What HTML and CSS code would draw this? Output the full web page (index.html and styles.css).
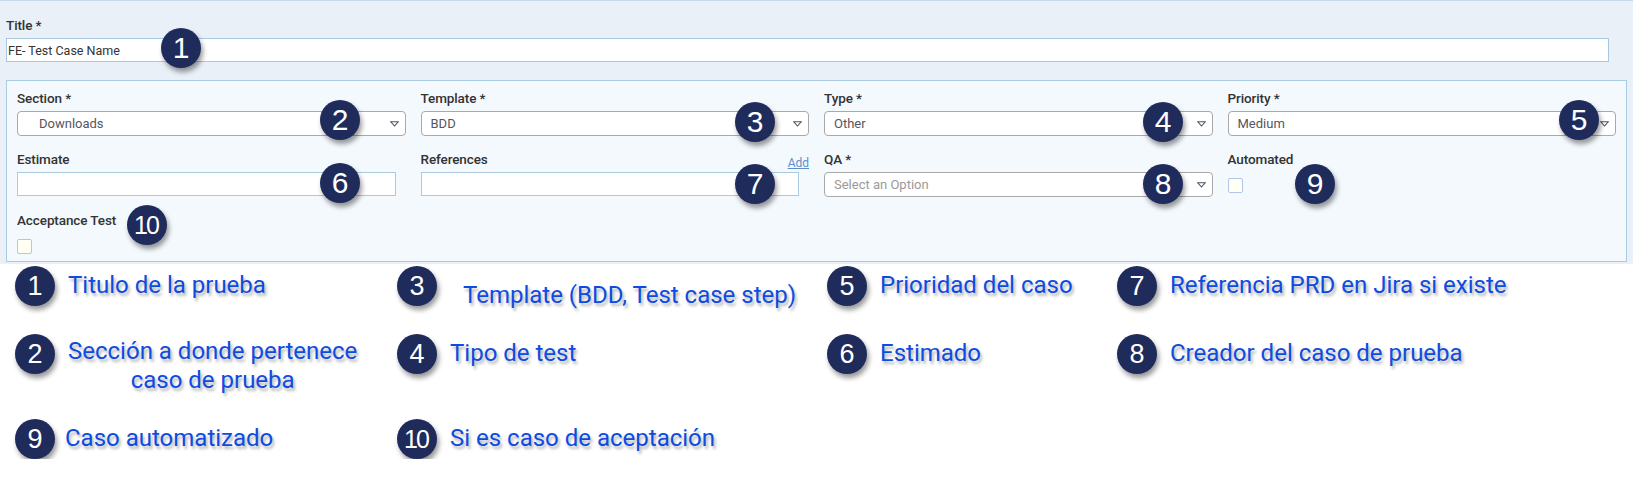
FILE: index.html
```html
<!DOCTYPE html>
<html lang="es">
<head>
<meta charset="utf-8">
<title>Test Case</title>
<link rel="stylesheet" href="styles.css">
</head>
<body>
<div class="form-area">
  <div class="title-field">
    <label class="field-label">Title <span class="req">*</span></label>
    <input class="text-input title-input" type="text" value="FE- Test Case Name">
  </div>

  <div class="panel">
    <div class="field">
      <label class="field-label">Section <span class="req">*</span></label>
      <div class="select select-indent"><span>Downloads</span><svg class="caret" width="9" height="6" viewBox="0 0 9 6"><polygon points="0.8,0.8 8.2,0.8 4.5,5" fill="none" stroke="#4d5566" stroke-width="1.1"/></svg></div>
    </div>
    <div class="field">
      <label class="field-label">Template <span class="req">*</span></label>
      <div class="select"><span>BDD</span><svg class="caret" width="9" height="6" viewBox="0 0 9 6"><polygon points="0.8,0.8 8.2,0.8 4.5,5" fill="none" stroke="#4d5566" stroke-width="1.1"/></svg></div>
    </div>
    <div class="field">
      <label class="field-label">Type <span class="req">*</span></label>
      <div class="select"><span>Other</span><svg class="caret" width="9" height="6" viewBox="0 0 9 6"><polygon points="0.8,0.8 8.2,0.8 4.5,5" fill="none" stroke="#4d5566" stroke-width="1.1"/></svg></div>
    </div>
    <div class="field">
      <label class="field-label">Priority <span class="req">*</span></label>
      <div class="select"><span>Medium</span><svg class="caret" width="9" height="6" viewBox="0 0 9 6"><polygon points="0.8,0.8 8.2,0.8 4.5,5" fill="none" stroke="#4d5566" stroke-width="1.1"/></svg></div>
    </div>

    <div class="field">
      <label class="field-label">Estimate</label>
      <input class="text-input narrow" type="text">
    </div>
    <div class="field">
      <div class="label-row">
        <label class="field-label">References</label>
        <a class="add-link" href="#">Add</a>
      </div>
      <input class="text-input narrow" type="text">
    </div>
    <div class="field">
      <label class="field-label">QA <span class="req">*</span></label>
      <div class="select"><span class="placeholder">Select an Option</span><svg class="caret" width="9" height="6" viewBox="0 0 9 6"><polygon points="0.8,0.8 8.2,0.8 4.5,5" fill="none" stroke="#4d5566" stroke-width="1.1"/></svg></div>
    </div>
    <div class="field">
      <label class="field-label">Automated</label>
      <span class="checkbox"></span>
    </div>

    <div class="field">
      <label class="field-label">Acceptance Test</label>
      <span class="checkbox"></span>
    </div>
  </div>

  <span class="badge b1">1</span>
  <span class="badge b2">2</span>
  <span class="badge b3">3</span>
  <span class="badge b4">4</span>
  <span class="badge b5">5</span>
  <span class="badge b6">6</span>
  <span class="badge b7">7</span>
  <span class="badge b8">8</span>
  <span class="badge b9">9</span>
  <span class="badge b10 ten">10</span>
</div>

<div class="legend">
  <div class="legend-item"><span class="legend-badge">1</span><span class="legend-text">Titulo de la prueba</span></div>
  <div class="legend-item"><span class="legend-badge">3</span><span class="legend-text shifted">Template (BDD, Test case step)</span></div>
  <div class="legend-item"><span class="legend-badge">5</span><span class="legend-text">Prioridad del caso</span></div>
  <div class="legend-item"><span class="legend-badge">7</span><span class="legend-text">Referencia PRD en Jira si existe</span></div>

  <div class="legend-item"><span class="legend-badge">2</span><span class="legend-text centered">Sección a donde pertenece<br>caso de prueba</span></div>
  <div class="legend-item"><span class="legend-badge">4</span><span class="legend-text">Tipo de test</span></div>
  <div class="legend-item"><span class="legend-badge">6</span><span class="legend-text">Estimado</span></div>
  <div class="legend-item"><span class="legend-badge">8</span><span class="legend-text">Creador del caso de prueba</span></div>

  <div class="legend-item"><span class="legend-badge">9</span><span class="legend-text tight">Caso automatizado</span></div>
  <div class="legend-item"><span class="legend-badge ten">10</span><span class="legend-text">Si es caso de aceptación</span></div>
</div>
</body>
</html>
```

FILE: styles.css
```css
* { box-sizing: border-box; }

body {
  margin: 0;
  background: #ffffff;
  font-family: Roboto, "Noto Sans", sans-serif;
}

.form-area {
  position: relative;
  background: #e9f0f7;
  border-top: 1px solid #c6d8e9;
  padding: 15px 6px 2px 6px;
}

.field-label {
  display: block;
  font-family: Roboto, sans-serif;
  font-weight: 500;
  font-size: 13.5px;
  line-height: 18px;
  color: #333333;
  letter-spacing: -0.1px;
}

.title-field {
  display: flex;
  flex-direction: column;
}

.text-input {
  display: block;
  margin-top: 4px;
  height: 24px;
  border: 1px solid #a9c9e1;
  border-radius: 0;
  background: #ffffff;
  padding: 0 1px;
  font-family: Roboto, sans-serif;
  font-size: 12.5px;
  color: #333333;
  outline: none;
}

.title-input {
  width: calc(100% - 18px);
}

.text-input.narrow {
  width: calc(100% - 10px);
}

.panel {
  margin-top: 18px;
  border: 1px solid #a9cbe3;
  background: #f4f9fe;
  padding: 8px 10px 7px 10px;
  display: grid;
  grid-template-columns: repeat(4, 1fr);
  column-gap: 15px;
  row-gap: 14px;
}

.field {
  display: flex;
  flex-direction: column;
  align-items: flex-start;
}

.field .select,
.field .label-row {
  width: 100%;
}

.label-row {
  display: flex;
  justify-content: space-between;
  align-items: flex-end;
}

.add-link {
  font-size: 12px;
  line-height: 14px;
  color: #5d8fcc;
  text-decoration: underline;
  margin-bottom: -2px;
}

.select {
  margin-top: 4px;
  height: 25px;
  border: 1px solid #a9a9a9;
  border-radius: 4px;
  background: #ffffff;
  display: flex;
  align-items: center;
  justify-content: space-between;
  padding: 0 6px 0 9px;
  font-size: 13px;
  color: #55565f;
}

.select-indent {
  padding-left: 21px;
}

.placeholder {
  color: #9a9a9a;
}

.caret {
  flex: none;
  display: block;
}

.checkbox {
  display: block;
  margin-top: 10px;
  width: 15px;
  height: 15px;
  border: 1px solid #b4c4ea;
  border-radius: 2px;
  background: #fffff2;
}

/* annotation badges over the form */
.badge {
  position: absolute;
  width: 40px;
  height: 40px;
  border-radius: 50%;
  background: #1f2b5b;
  color: #ffffff;
  display: flex;
  align-items: center;
  justify-content: center;
  font-family: "Liberation Sans", Arial, sans-serif;
  font-size: 30px;
  line-height: 1;
  box-shadow: 2px 4px 5px rgba(0, 0, 0, 0.4);
}

.badge.ten,
.legend-badge.ten {
  font-size: 25px;
  letter-spacing: -2px;
  padding-right: 2px;
}

.b1 { left: 161px; top: 27px; }
.b2 { left: 320px; top: 99px; }
.b3 { left: 735px; top: 101px; }
.b4 { left: 1143px; top: 101px; }
.b5 { left: 1559px; top: 99px; }
.b6 { left: 320px; top: 162px; }
.b7 { left: 735px; top: 163px; }
.b8 { left: 1143px; top: 163px; }
.b9 { left: 1295px; top: 163px; }
.b10 { left: 127px; top: 204px; }

/* legend */
.legend {
  display: grid;
  grid-template-columns: 382px 430px 290px 1fr;
  row-gap: 24px;
  padding: 2px 0 0 15px;
}

.legend-item {
  display: flex;
  align-items: flex-start;
  gap: 13px;
}

.legend-badge {
  flex: none;
  width: 40px;
  height: 40px;
  border-radius: 50%;
  background: #1f2b5b;
  color: #ffffff;
  display: flex;
  align-items: center;
  justify-content: center;
  font-family: "Liberation Sans", Arial, sans-serif;
  font-size: 27px;
  line-height: 1;
  box-shadow: 2px 4px 5px rgba(0, 0, 0, 0.4);
}

.legend-text {
  padding-top: 5px;
  font-family: Roboto, sans-serif;
  font-size: 24px;
  line-height: 29px;
  color: #0e4be2;
  text-shadow: 2px 3px 3px rgba(0, 0, 0, 0.3);
  white-space: nowrap;
}

.legend-text.centered {
  text-align: center;
  padding-top: 3px;
}

.legend-text.shifted {
  padding-top: 15px;
  margin-left: 13px;
}

.legend-text.tight {
  margin-left: -3px;
}
```
